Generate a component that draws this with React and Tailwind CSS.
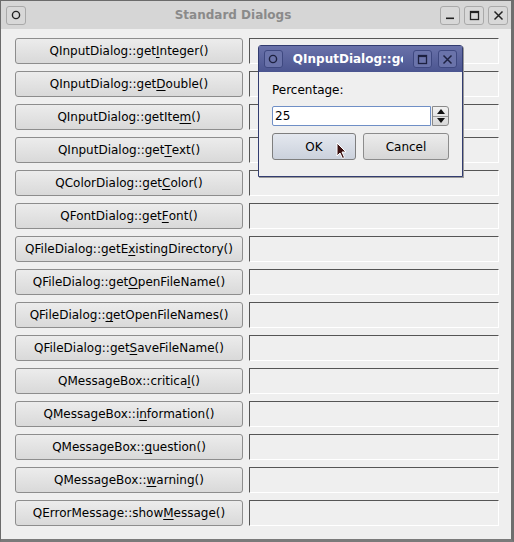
import React from "react";

const font = { fontFamily: '"DejaVu Sans", "Liberation Sans", sans-serif' };

const rows = [
  ["QInputDialog::get", "I", "nteger()"],
  ["QInputDialog::get", "D", "ouble()"],
  ["QInputDialog::getIte", "m", "()"],
  ["QInputDialog::get", "T", "ext()"],
  ["QColorDialog::get", "C", "olor()"],
  ["QFontDialog::get", "F", "ont()"],
  ["QFileDialog::getE", "x", "istingDirectory()"],
  ["QFileDialog::get", "O", "penFileName()"],
  ["QFileDialog::", "g", "etOpenFileNames()"],
  ["QFileDialog::get", "S", "aveFileName()"],
  ["QMessageBox::critica", "l", "()"],
  ["QMessageBox::i", "n", "formation()"],
  ["QMessageBox::", "q", "uestion()"],
  ["QMessageBox::", "w", "arning()"],
  ["QErrorMessage::show", "M", "essage()"],
];

function TitleButton({ children, dark }) {
  return (
    <div
      className={
        dark
          ? "w-[19px] h-[18px] rounded-[3px] border border-[#3e4880] bg-[#6a73aa] flex items-center justify-center text-[#1d2140]"
          : "w-[20px] h-[19px] rounded-[3px] border border-[#a9a9a9] bg-[#d8d8d8] flex items-center justify-center text-[#222]"
      }
    >
      {children}
    </div>
  );
}

const CircleIcon = () => (
  <svg width="10" height="10" viewBox="0 0 10 10">
    <circle cx="5" cy="5" r="3.6" fill="none" stroke="currentColor" strokeWidth="1.4" />
  </svg>
);
const MinIcon = () => (
  <svg width="10" height="10" viewBox="0 0 10 10">
    <rect x="1" y="7.5" width="8" height="1.6" fill="currentColor" />
  </svg>
);
const MaxIcon = () => (
  <svg width="11" height="11" viewBox="0 0 11 11">
    <rect x="1.5" y="1.5" width="8" height="8" fill="none" stroke="currentColor" strokeWidth="1.3" />
    <rect x="1.5" y="1.5" width="8" height="1.6" fill="currentColor" />
  </svg>
);
const CloseIcon = () => (
  <svg width="11" height="11" viewBox="0 0 11 11">
    <path d="M1.5 1.5 L9.5 9.5 M9.5 1.5 L1.5 9.5" stroke="currentColor" strokeWidth="1.5" />
  </svg>
);

function InputDialog() {
  return (
    <div className="absolute left-[257px] top-[44px] w-[205px] h-[132px] border border-[#323c70] rounded-t-[3px] bg-[#efefef] flex flex-col shadow-[1px_1px_0_#9a9a9a]">
      <div className="h-[26px] bg-gradient-to-b from-[#6a72aa] to-[#4b5590] flex items-center px-[5px] gap-[10px]">
        <TitleButton dark>
          <CircleIcon />
        </TitleButton>
        <div className="w-[111px] overflow-hidden whitespace-nowrap text-white font-bold text-[12px]">
          QInputDialog::getInteger()
        </div>
        <div className="ml-auto flex gap-[6px]">
          <TitleButton dark>
            <MaxIcon />
          </TitleButton>
          <TitleButton dark>
            <CloseIcon />
          </TitleButton>
        </div>
      </div>
      <div className="flex-1 px-[13px] pt-[11px] flex flex-col">
        <div className="text-[12px] text-black leading-[14px]">Percentage:</div>
        <div className="mt-[9px] flex h-[20px] w-[177px] gap-[1px]">
          <div className="flex-1 border border-[#6f8fc6] bg-white rounded-l-[2px] text-[12px] leading-[18px] px-[2px] text-black">
            25
          </div>
          <div className="w-[17px] flex flex-col border border-[#8a8a8a] rounded-r-[3px] bg-gradient-to-b from-[#f2f2f2] to-[#d8d8d8]">
            <div className="flex-1 flex items-center justify-center border-b border-[#9a9a9a]">
              <svg width="8" height="5" viewBox="0 0 8 5">
                <path d="M0 5 L4 0 L8 5 Z" fill="#111" />
              </svg>
            </div>
            <div className="flex-1 flex items-center justify-center">
              <svg width="8" height="5" viewBox="0 0 8 5">
                <path d="M0 0 L4 5 L8 0 Z" fill="#111" />
              </svg>
            </div>
          </div>
        </div>
        <div className="mt-[7px] flex gap-[7px]">
          <div className="w-[84px] h-[27px] rounded-[3px] border border-[#7e7e7e] bg-gradient-to-b from-[#e4e8ef] to-[#cbd1dc] flex items-center justify-center text-[12px] text-black">
            OK
          </div>
          <div className="w-[86px] h-[27px] rounded-[3px] border border-[#8c8c8c] bg-gradient-to-b from-[#ececec] to-[#d6d6d6] flex items-center justify-center text-[12px] text-black">
            Cancel
          </div>
        </div>
      </div>
      <svg className="absolute left-[77px] top-[96px]" width="12" height="18" viewBox="0 0 12 18">
        <path d="M1 1 L1 14 L4 11 L6.5 16.5 L8.5 15.5 L6 10 L10 10 Z" fill="#3b1010" stroke="#fff" strokeWidth="1" />
      </svg>
    </div>
  );
}

export default function App() {
  return (
    <div style={font} className="relative w-[514px] h-[542px] bg-[#efefef] border-l border-t border-[#6b6b6b] border-r-[3px] border-r-[#6e6e6e] border-b-[3px] border-b-[#7a7a7a] overflow-hidden">
      <div className="h-[28px] bg-[#d6d6d6] flex items-center pl-[5px] pr-[3px]">
        <TitleButton>
          <CircleIcon />
        </TitleButton>
        <div className="flex-1 text-center font-bold text-[12px] text-[#8a8a8a]">Standard Dialogs</div>
        <div className="flex gap-[4px]">
          <TitleButton>
            <MinIcon />
          </TitleButton>
          <TitleButton>
            <MaxIcon />
          </TitleButton>
          <TitleButton>
            <CloseIcon />
          </TitleButton>
        </div>
      </div>
      <div className="pt-[9px] pl-[14px] flex flex-col gap-[7px]">
        {rows.map(([a, u, b]) => (
          <div key={a + u + b} className="flex gap-[6px] h-[26px]">
            <div className="w-[228px] h-[26px] rounded-[3px] border border-[#8d8d8d] bg-gradient-to-b from-[#ececec] to-[#d9d9d9] flex items-center justify-center text-[12px] text-black whitespace-nowrap">
              {a}
              <span className="underline underline-offset-2">{u}</span>
              {b}
            </div>
            <div className="w-[250px] h-[26px] border-t border-l border-t-[#555] border-l-[#555] border-b border-r border-b-white border-r-white" />
          </div>
        ))}
      </div>
      <InputDialog />
    </div>
  );
}
